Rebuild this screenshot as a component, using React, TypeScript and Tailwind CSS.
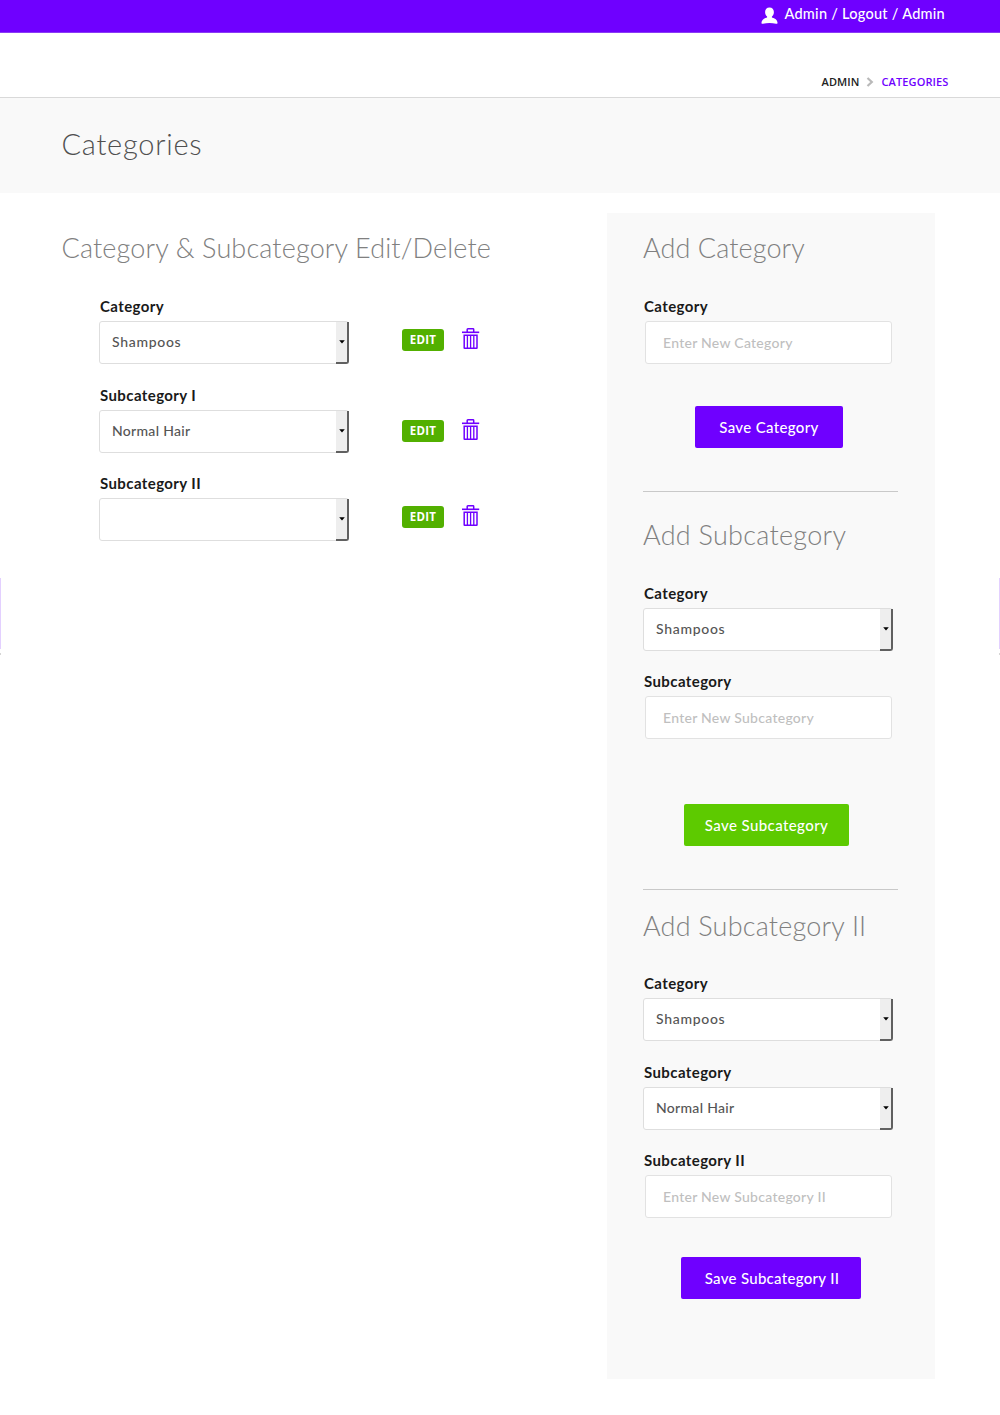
import type { ReactNode } from 'react';

const Heading = ({ children, className }: { children: ReactNode; className: string }) => (
  <h2 className={`h-10 text-[27px] font-light leading-10 whitespace-nowrap text-[#808080] ${className}`}>{children}</h2>
);

const Label = ({ children }: { children: string }) => (
  <span className="-mt-px block h-[25px] pl-px text-[15px] font-bold leading-5 tracking-[0.4px] whitespace-nowrap text-[#1a1a1a]">
    {children}
  </span>
);

const SelectField = ({ label, value }: { label: string; value?: string }) => (
  <div className="w-[250px]">
    <Label>{label}</Label>
    <div className="flex h-[43px] items-stretch justify-between rounded-[3px] border border-[#dedede] bg-white">
      <span
        className={`pl-3 text-[14px] font-medium leading-[40px] text-[#555] ${
          value === 'Shampoos' ? 'tracking-[0.7px]' : 'tracking-[0.3px]'
        }`}
      >
        {value}
      </span>
      <span className="-mr-px -mb-px flex w-[13px] items-center justify-center rounded-br-[3px] border-r-2 border-b-2 border-[#606060] bg-[#eee]">
        <svg width="6" height="4" viewBox="0 0 6 4" className="ml-px">
          <path d="M0.2 0.3h5.6L3 3.6z" fill="#000" />
        </svg>
      </span>
    </div>
  </div>
);

const InputField = ({ label, placeholder }: { label: string; placeholder: string }) => (
  <div className="w-[249px]">
    <Label>{label}</Label>
    <div className="ml-[2px] h-[43px] rounded-[3px] border border-[#e2e2e2] bg-white pl-[17px] text-[14px] font-medium leading-[41px] tracking-[0.27px] whitespace-nowrap text-[#bfbfbf]">
      {placeholder}
    </div>
  </div>
);

const SaveButton = ({ children, className }: { children: string; className: string }) => (
  <button
    type="button"
    className={`block h-[42px] rounded-[2px] text-center text-[15px] font-medium leading-[42px] whitespace-nowrap text-white ${className}`}
  >
    {children}
  </button>
);

const TrashIcon = ({ className }: { className: string }) => (
  <svg width="18" height="21" viewBox="0 0 18 21" fill="none" stroke="#6f00ff" strokeWidth="1.5" className={className}>
    <path d="M5.2 4V1.5Q5.2 0.8 5.9 0.8H11Q11.7 0.8 11.7 1.5V4" />
    <path d="M0 4.3H17.2" strokeWidth="1.6" />
    <path d="M2.2 7.2H15V19.9Q15 20.2 14.6 20.2H2.6Q2.2 20.2 2.2 19.9Z" />
    <path d="M5.4 7.2V20M8.6 7.2V20M11.8 7.2V20" strokeWidth="1.3" />
  </svg>
);

const Actions = ({ className, iconClass }: { className: string; iconClass: string }) => (
  <div className={`flex h-[22px] items-start gap-[18px] ${className}`}>
    <button
      type="button"
      className="h-[22px] w-[42px] rounded-[3px] bg-[#52b000] text-center font-['Open_Sans',sans-serif] text-[11.5px] font-bold leading-[22px] tracking-[0.3px] text-white"
    >
      EDIT
    </button>
    <TrashIcon className={iconClass} />
  </div>
);

const rows = [
  { label: 'Category', value: 'Shampoos', actions: 'mt-[32px]', icon: '-mt-px' },
  { label: 'Subcategory I', value: 'Normal Hair', actions: 'mt-[34px]', icon: '-mt-px' },
  { label: 'Subcategory II', value: '', actions: 'mt-[32px]', icon: '-mt-px' },
];

export default function App() {
  return (
    <div className="relative min-h-[1415px] w-[1000px] overflow-hidden bg-white font-['Lato',sans-serif]">
      <header className="flex h-[33px] justify-end border-b border-[#8a3cf5] bg-[#6f00ff] pr-[55px]">
        <div className="flex h-7 items-center gap-[7px]">
          <svg width="17" height="18" viewBox="0 0 17 18" fill="#fff" className="mt-[3px] -mr-px">
            <path d="M8.5 0.6c2.7 0 4.4 1.8 4.4 4.5 0 1.9-.8 3.6-2 4.5v.8c3.1.7 5.4 2.5 5.6 5 .1 1.1-.5 1.6-1.5 1.4-4.1-1.1-8.9-1.1-13 0-1 .2-1.6-.3-1.5-1.4.2-2.5 2.5-4.3 5.6-5v-.8c-1.2-.9-2-2.6-2-4.5 0-2.7 1.7-4.5 4.4-4.5z" />
          </svg>
          <span className="text-[14.5px] font-medium leading-[26px] tracking-[0.27px] whitespace-nowrap text-white">
            Admin / Logout / Admin
          </span>
        </div>
      </header>
      <nav className="flex h-[65px] items-start justify-end border-b border-[#d9d9d9] pt-[39px] pr-[51.5px] font-['Open_Sans',sans-serif] text-[11px] font-semibold leading-5 text-[#222]">
        <span className="tracking-[0.1px]">ADMIN</span>
        <svg width="8" height="10" viewBox="0 0 8 10" fill="none" stroke="#b9b9b9" strokeWidth="2.2" className="mt-[5px] mr-[7px] ml-[7px]">
          <path d="M1.5 1L5.8 5L1.5 9" />
        </svg>
        <span className="tracking-[0.12px] text-[#6f00ff]">CATEGORIES</span>
      </nav>
      <section className="h-[95px] bg-[#f9f9f9] pt-[26px] pl-[61.5px]">
        <h1 className="h-10 text-[29px] font-light leading-[39px] tracking-[0.75px] text-[#505050]">Categories</h1>
      </section>
      <main className="flex items-start pl-[61px]">
        <section className="w-[546px] pt-[35px]">
          <Heading className="pl-[0.5px] tracking-[0.14px]">Category &amp; Subcategory Edit/Delete</Heading>
          <div className="mt-[29px] ml-[38px] flex flex-col gap-[21.5px]">
            {rows.map((row) => (
              <div key={row.label} className="flex items-start gap-[53px]">
                <SelectField label={row.label} value={row.value} />
                <Actions className={row.actions} iconClass={row.icon} />
              </div>
            ))}
          </div>
        </section>
        <aside className="mt-5 h-[1166px] w-[328px] bg-[#f9f9f9] pt-[15px] pl-9">
          <section className="box-content h-[262.5px] w-[255px] border-b border-[#c9c9c9]">
            <Heading className="tracking-[0.1px]">Add Category</Heading>
            <div className="mt-[29px]">
              <InputField label="Category" placeholder="Enter New Category" />
            </div>
            <SaveButton className="mt-[42px] ml-[52px] w-[148px] bg-[#6f00ff] tracking-[0.35px]">Save Category</SaveButton>
          </section>
          <section className="box-content h-[374px] w-[255px] border-b border-[#c9c9c9] pt-[23.5px]">
            <Heading className="tracking-[0.28px]">Add Subcategory</Heading>
            <div className="mt-[28.5px] flex flex-col gap-[21.5px]">
              <SelectField label="Category" value="Shampoos" />
              <InputField label="Subcategory" placeholder="Enter New Subcategory" />
            </div>
            <SaveButton className="mt-[64.5px] ml-[41px] w-[165px] bg-[#5dca00] tracking-[0.42px]">Save Subcategory</SaveButton>
          </section>
          <section className="pt-[15.5px]">
            <Heading className="tracking-[0.2px]">Add Subcategory II</Heading>
            <div className="mt-[28.5px] flex flex-col gap-[21.5px]">
              <SelectField label="Category" value="Shampoos" />
              <SelectField label="Subcategory" value="Normal Hair" />
              <InputField label="Subcategory II" placeholder="Enter New Subcategory II" />
            </div>
            <SaveButton className="mt-[38.5px] ml-[38px] w-[180px] bg-[#6f00ff] pl-0.5 tracking-[0.3px]">Save Subcategory II</SaveButton>
          </section>
        </aside>
      </main>
      <div className="absolute top-[578px] left-0 h-[71px] w-px bg-[#e3d0ff]" />
      <div className="absolute top-[653px] left-0 h-[2px] w-px bg-[#d5d5d5]" />
      <div className="absolute top-[578px] right-0 h-[71px] w-px bg-[#e3d0ff]" />
      <div className="absolute top-[653px] right-0 h-[2px] w-px bg-[#d5d5d5]" />
    </div>
  );
}
